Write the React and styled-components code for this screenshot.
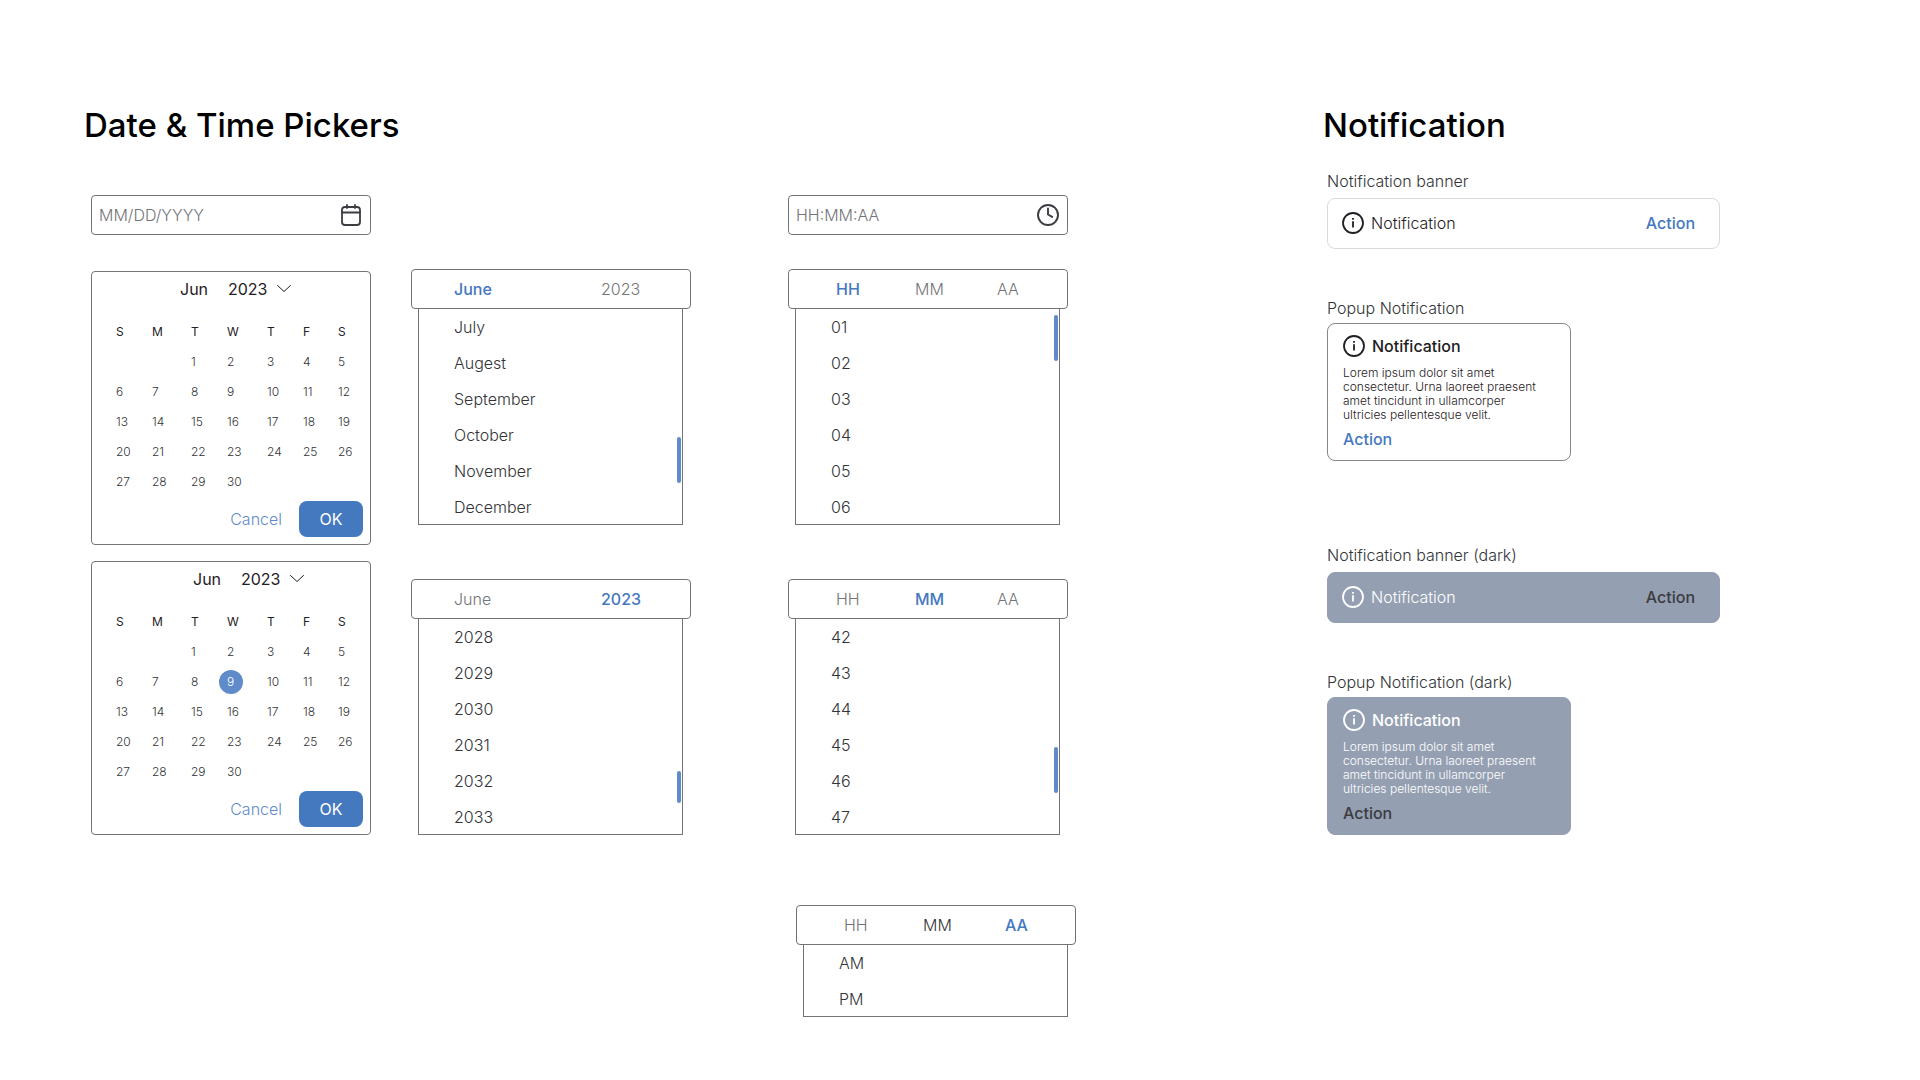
import React from "react";
import styled, { createGlobalStyle } from "styled-components";

const color = {
  ink: "#1f2023",
  text: "#333438",
  muted: "#737478",
  line: "#737478",
  blue: "#4478bf",
  blueSoft: "#5f8bca",
  slate: "#959fb2",
};

const GlobalStyle = createGlobalStyle`
  *, *::before, *::after { box-sizing: border-box; }
  body {
    margin: 0;
    background: #fff;
    color: ${color.text};
    font-family: Inter, "Liberation Sans", sans-serif;
    font-size: 16px;
    font-weight: 300;
    line-height: 24px;
  }
  button, input, select { font: inherit; color: inherit; }
  button { padding: 0; border: 0; background: none; text-align: left; cursor: pointer; }
`;

const Page = styled.main`
  display: grid;
  grid-template-columns: minmax(1060px, 1239fr) minmax(420px, 597fr);
  padding: 103px 0 60px 84px;
`;

const Heading = styled.h1`
  margin: 0;
  color: #000;
  font-size: 33px;
  font-weight: 500;
  line-height: 44px;
`;

const Columns = styled.div`
  display: flex;
  padding: 48px 0 0 7px;
`;

const Column = styled.div`
  display: flex;
  flex-direction: column;
  width: ${(p) => p.$width || 280}px;
  margin-right: ${(p) => p.$after || 0}px;
  padding-top: ${(p) => p.$top || 0}px;
`;

const Stack = styled.div`
  display: flex;
  flex-direction: column;
  gap: ${(p) => p.$gap}px;
  margin-top: ${(p) => p.$top || 0}px;
`;

const Field = styled.label`
  display: flex;
  align-items: center;
  width: 280px;
  height: 40px;
  padding: 0 7px;
  border: 1px solid ${color.line};
  border-radius: 4px;
`;

const FieldInput = styled.input`
  flex: 1;
  min-width: 0;
  padding: 0;
  border: 0;
  outline: 0;
  background: none;
  &::placeholder { color: ${color.muted}; opacity: 1; }
`;

const Card = styled.section`
  width: 280px;
  padding-bottom: 7px;
  border: 1px solid ${color.line};
  border-radius: 4px;
`;

const CardHeader = styled.header`
  display: flex;
  align-items: center;
  height: 34px;
  padding-left: ${(p) => p.$inset}px;
  color: ${color.ink};
  font-weight: 400;
`;

const Month = styled.span`
  width: 48px;
`;

const YearPicker = styled.label`
  display: flex;
  align-items: center;
`;

const YearSelect = styled.select`
  width: 48px;
  padding: 0;
  border: 0;
  appearance: none;
  background: none;
`;

const Days = styled.table`
  width: 256px;
  margin: 11px 0 0 16px;
  border-collapse: collapse;
  table-layout: fixed;
  font-size: 12px;
  line-height: 24px;
  color: ${color.text};
  th, td { height: 30px; padding: 0; text-align: left; }
  th { padding-left: 8px; color: ${color.ink}; font-weight: 400; }
`;

const DayCol = styled.col`
  width: ${(p) => p.$width}px;
`;

const Day = styled.button`
  display: block;
  min-width: 24px;
  height: 24px;
  padding: 0 8px;
  border-radius: 12px;
  background: ${(p) => (p.$selected ? color.blueSoft : "none")};
  color: ${(p) => (p.$selected ? "#fff" : "inherit")};
`;

const CardFooter = styled.footer`
  display: flex;
  justify-content: flex-end;
  gap: 17px;
  margin-top: 4px;
  padding-right: 7px;
`;

const CancelButton = styled.button`
  color: ${color.blueSoft};
`;

const OkButton = styled.button`
  width: 64px;
  height: 36px;
  border-radius: 8px;
  background: ${color.blue};
  color: #fff;
  font-weight: 400;
  text-align: center;
`;

const Wheel = styled.section`
  width: 280px;
  align-self: ${(p) => (p.$end ? "flex-end" : "flex-start")};
  margin-top: ${(p) => p.$top || 0}px;
`;

const Tabs = styled.div`
  display: grid;
  grid-template-columns: ${(p) => p.$columns};
  align-items: center;
  height: 40px;
  padding-left: ${(p) => p.$inset}px;
  border: 1px solid ${color.line};
  border-radius: 4px;
`;

const Tab = styled.button`
  color: ${(p) => (p.$active ? color.blue : p.$filled ? color.text : color.muted)};
  font-weight: ${(p) => (p.$active ? 500 : 300)};
`;

const WheelBody = styled.div`
  display: flex;
  justify-content: space-between;
  margin: 0 8px 0 7px;
  padding: 0 2px 0 36px;
  box-shadow: inset 1px 0 ${color.line}, inset -1px -1px ${color.line};
`;

const Options = styled.ul`
  margin: 0;
  padding: 0;
  list-style: none;
  line-height: 36px;
`;

const Thumb = styled.span`
  width: 4px;
  height: ${(p) => p.$height}px;
  margin-top: ${(p) => p.$top}px;
  border-radius: 2px;
  background: ${color.blueSoft};
`;

const Notices = styled.div`
  padding: 22px 0 0 4px;
`;

const Group = styled.div`
  display: flex;
  flex-direction: column;
  align-items: flex-start;
  gap: ${(p) => p.$gap}px;
  margin-bottom: ${(p) => p.$after || 0}px;
`;

const Banner = styled.div`
  display: flex;
  align-items: center;
  gap: 7px;
  width: 393px;
  height: 51px;
  padding: 0 24px 1px 14px;
  border: 1px solid ${(p) => (p.$dark ? color.slate : "#d9dadc")};
  border-radius: 8px;
  background: ${(p) => (p.$dark ? color.slate : "#fff")};
  color: ${(p) => (p.$dark ? "#fff" : color.ink)};
`;

const BannerText = styled.span`
  flex: 1;
`;

const Popup = styled.div`
  width: 244px;
  padding: 10px 15px 9px;
  border: 1px solid ${(p) => (p.$dark ? color.slate : "#87888b")};
  border-radius: 8px;
  background: ${(p) => (p.$dark ? color.slate : "#fff")};
  color: ${(p) => (p.$dark ? "#fff" : color.ink)};
`;

const PopupTitle = styled.h2`
  display: flex;
  align-items: center;
  gap: 7px;
  margin: 0;
  font-size: 16px;
  font-weight: 500;
  line-height: 24px;
`;

const PopupText = styled.p`
  width: 204px;
  margin: 8px 0 5px;
  font-size: 12px;
  line-height: 14px;
`;

const ActionButton = styled.button`
  display: block;
  color: ${(p) => (p.$dark ? "#3b3c40" : color.blue)};
  font-weight: 500;
`;

const CalendarIcon = () => (
  <svg width="24" height="24" viewBox="0 0 24 24" fill="none" stroke="#3c3c42" strokeWidth="1.8" strokeLinecap="round" aria-hidden="true">
    <rect x="3" y="4" width="18" height="18" rx="3" />
    <path d="M8 2v3M16 2v3M3 9.5h18" />
  </svg>
);

const ClockIcon = () => (
  <svg width="24" height="24" viewBox="0 0 24 24" fill="none" stroke="#3c3c42" strokeWidth="1.9" strokeLinecap="round" strokeLinejoin="round" aria-hidden="true">
    <circle cx="12" cy="12" r="10" />
    <path d="M12 5.5v6l4.2 2.4" />
  </svg>
);

const ChevronIcon = () => (
  <svg width="16" height="16" viewBox="0 0 16 16" fill="none" stroke={color.ink} strokeWidth="1" strokeLinecap="round" strokeLinejoin="round" aria-hidden="true">
    <path d="M1.5 4.5l6.5 6 6.5-6" />
  </svg>
);

const InfoIcon = () => (
  <svg width="22" height="22" viewBox="0 0 22 22" fill="none" stroke="currentColor" strokeWidth="1.8" aria-hidden="true">
    <circle cx="11" cy="11" r="10" />
    <path d="M11 9.3v6.2M11 6v1.8" />
  </svg>
);

const WEEKDAYS = ["S", "M", "T", "W", "T", "F", "S"];
const DAY_WIDTHS = [36, 39, 36, 40, 36, 35, 34];
const WEEKS = [0, 1, 2, 3, 4].map((w) =>
  WEEKDAYS.map((_, d) => {
    const n = w * 7 + d - 1;
    return n > 0 && n < 31 ? n : null;
  })
);

function Calendar({ selected, inset }) {
  return (
    <Card>
      <CardHeader $inset={inset}>
        <Month>Jun</Month>
        <YearPicker>
          <YearSelect aria-label="Year" defaultValue="2023">
            <option>2023</option>
            <option>2024</option>
          </YearSelect>
          <ChevronIcon />
        </YearPicker>
      </CardHeader>
      <Days>
        <colgroup>
          {DAY_WIDTHS.map((w, i) => (
            <DayCol key={i} $width={w} />
          ))}
        </colgroup>
        <thead>
          <tr>
            {WEEKDAYS.map((d, i) => (
              <th key={i} scope="col">{d}</th>
            ))}
          </tr>
        </thead>
        <tbody>
          {WEEKS.map((week, w) => (
            <tr key={w}>
              {week.map((n, d) => (
                <td key={d}>
                  {n && <Day type="button" $selected={n === selected}>{n}</Day>}
                </td>
              ))}
            </tr>
          ))}
        </tbody>
      </Days>
      <CardFooter>
        <CancelButton type="button">Cancel</CancelButton>
        <OkButton type="button">OK</OkButton>
      </CardFooter>
    </Card>
  );
}

function WheelPicker({ tabs, active, filled, options, thumb, top, end }) {
  const two = tabs.length === 2;
  return (
    <Wheel $top={top} $end={end}>
      <Tabs $inset={two ? 42 : 47} $columns={two ? "147px 1fr" : "79px 82px 1fr"}>
        {tabs.map((t) => (
          <Tab key={t} type="button" $active={t === active} $filled={t === filled}>{t}</Tab>
        ))}
      </Tabs>
      <WheelBody>
        <Options>
          {options.map((o) => (
            <li key={o}>{o}</li>
          ))}
        </Options>
        {thumb && <Thumb $top={thumb[0]} $height={thumb[1]} />}
      </WheelBody>
    </Wheel>
  );
}

const LOREM =
  "Lorem ipsum dolor sit amet consectetur. Urna laoreet praesent amet tincidunt in ullamcorper ultricies pellentesque velit.";

function NoticePair({ dark, after }) {
  const suffix = dark ? " (dark)" : "";
  return (
    <>
      <Group $gap={5} $after={47}>
        <span>Notification banner{suffix}</span>
        <Banner $dark={dark}>
          <InfoIcon />
          <BannerText>Notification</BannerText>
          <ActionButton type="button" $dark={dark}>Action</ActionButton>
        </Banner>
      </Group>
      <Group $gap={3} $after={after}>
        <span>Popup Notification{suffix}</span>
        <Popup $dark={dark}>
          <PopupTitle><InfoIcon />Notification</PopupTitle>
          <PopupText>{LOREM}</PopupText>
          <ActionButton type="button" $dark={dark}>Action</ActionButton>
        </Popup>
      </Group>
    </>
  );
}

const DATE_TABS = ["June", "2023"];
const TIME_TABS = ["HH", "MM", "AA"];

export default function App() {
  return (
    <>
      <GlobalStyle />
      <Page>
        <section>
          <Heading>Date &amp; Time Pickers</Heading>
          <Columns>
            <Column $after={40}>
              <Field>
                <FieldInput placeholder="MM/DD/YYYY" aria-label="Date" />
                <CalendarIcon />
              </Field>
              <Stack $gap={16} $top={36}>
                <Calendar inset={88} />
                <Calendar inset={101} selected={9} />
              </Stack>
            </Column>
            <Column $after={97} $top={74}>
              <WheelPicker tabs={DATE_TABS} active="June" thumb={[128, 46]}
                options={["July", "Augest", "September", "October", "November", "December"]} />
              <WheelPicker tabs={DATE_TABS} active="2023" thumb={[152, 32]} top={54}
                options={["2028", "2029", "2030", "2031", "2032", "2033"]} />
            </Column>
            <Column $width={288}>
              <Field>
                <FieldInput placeholder="HH:MM:AA" aria-label="Time" />
                <ClockIcon />
              </Field>
              <WheelPicker tabs={TIME_TABS} active="HH" thumb={[6, 46]} top={34}
                options={["01", "02", "03", "04", "05", "06"]} />
              <WheelPicker tabs={TIME_TABS} active="MM" thumb={[128, 46]} top={54}
                options={["42", "43", "44", "45", "46", "47"]} />
              <WheelPicker tabs={TIME_TABS} active="AA" filled="MM" top={70} end options={["AM", "PM"]} />
            </Column>
          </Columns>
        </section>
        <section>
          <Heading as="h2">Notification</Heading>
          <Notices>
            <NoticePair after={82} />
            <NoticePair dark />
          </Notices>
        </section>
      </Page>
    </>
  );
}
